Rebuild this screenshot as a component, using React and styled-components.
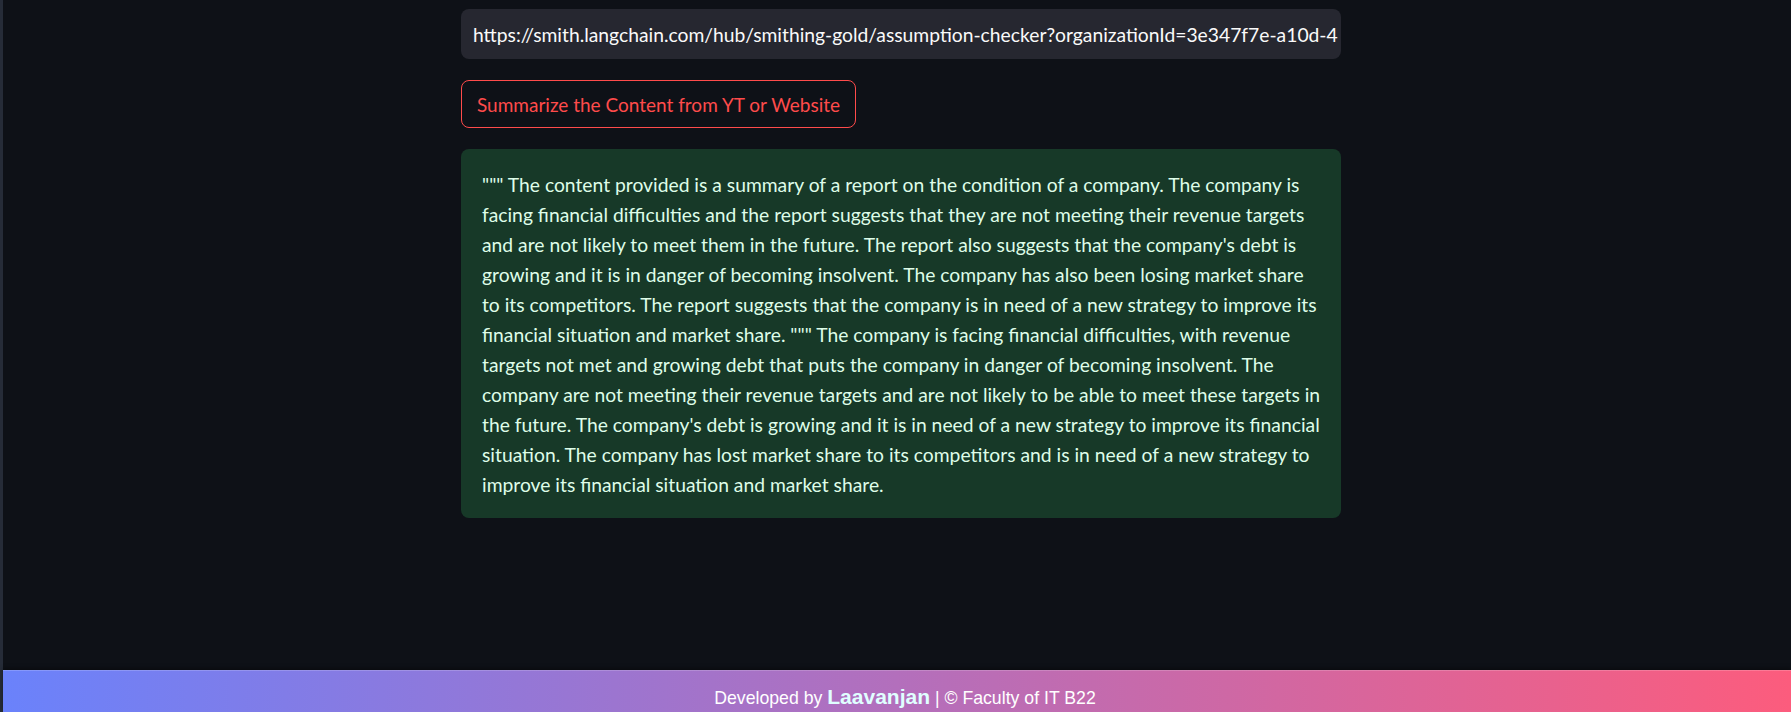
import React from 'react'
import styled, {createGlobalStyle} from 'styled-components'

const GlobalStyle = createGlobalStyle`
  html, body {
    margin: 0;
    padding: 0;
    background: #0e1117;
  }
  body {
    font-family: Lato, "Noto Sans", sans-serif;
    color: #fafafa;
  }
`;

const Page = styled.div`
  display: flex;
  min-height: 712px;
  background: #0e1117;
`;

// thin sidebar edge on the left
const SideEdge = styled.div`
  width: 3px;
  flex: none;
  background: #262c38;
`;

const Main = styled.div`
  flex: 1;
  display: flex;
  flex-direction: column;
`;

const Content = styled.div`
  flex: 1;
  display: flex;
  justify-content: center;
  padding: 9px 0 0 8px;
`;

const Column = styled.div`
  width: 880px;
  display: flex;
  flex-direction: column;
  align-items: flex-start;
  gap: 21px;
`;

const UrlInput = styled.div`
  width: 100%;
  height: 50px;
  box-sizing: border-box;
  background: #262730;
  border-radius: 8px;
  padding: 0 11px 0 12px;
  display: flex;
  align-items: center;
  overflow: hidden;
  white-space: nowrap;
  font-size: 19.3px;
  color: #fafafa;
`;

const OutlineButton = styled.button`
  height: 48px;
  box-sizing: border-box;
  padding: 0 15px;
  background: transparent;
  border: 1px solid #ff4b4b;
  border-radius: 8px;
  color: #ff4b4b;
  font-family: Lato, "Noto Sans", sans-serif;
  font-size: 19px;
  cursor: pointer;
`;

const SuccessBox = styled.div`
  width: 100%;
  box-sizing: border-box;
  background: #173928;
  border-radius: 8px;
  padding: 21px 21px 18px;
  color: #dffde9;
  font-size: 19.3px;
  line-height: 30px;
`;

const Line = styled.span`
  display: block;
  white-space: nowrap;
`;

const Footer = styled.footer`
  height: 42px;
  box-sizing: border-box;
  padding: 14px 0 0 16px;
  background: linear-gradient(90deg, #6a82fb, #fc5c7d);
  border-top: 1px solid rgba(255, 255, 255, 0.18);
  box-shadow: 0 -2px 4px rgba(0, 0, 0, 0.35);
  text-align: center;
  font-family: "Liberation Sans", Arial, sans-serif;
  font-size: 17.7px;
  color: #ffffff;
  overflow: hidden;
  white-space: nowrap;
`;

const Author = styled.span`
  font-weight: bold;
  font-size: 21px;
  color: #e0ffff;
`;

const url = 'https://smith.langchain.com/hub/smithing-gold/assumption-checker?organizationId=3e347f7e-a10d-4';

const summaryLines = [
  `""" The content provided is a summary of a report on the condition of a company. The company is`,
  `facing financial difficulties and the report suggests that they are not meeting their revenue targets`,
  `and are not likely to meet them in the future. The report also suggests that the company's debt is`,
  `growing and it is in danger of becoming insolvent. The company has also been losing market share`,
  `to its competitors. The report suggests that the company is in need of a new strategy to improve its`,
  `financial situation and market share. """ The company is facing financial difficulties, with revenue`,
  `targets not met and growing debt that puts the company in danger of becoming insolvent. The`,
  `company are not meeting their revenue targets and are not likely to be able to meet these targets in`,
  `the future. The company's debt is growing and it is in need of a new strategy to improve its financial`,
  `situation. The company has lost market share to its competitors and is in need of a new strategy to`,
  `improve its financial situation and market share.`,
];

export default function App() {
  return (
    <>
      <GlobalStyle/>
      <Page>
        <SideEdge/>
        <Main>
          <Content>
            <Column>
              <UrlInput>{url}</UrlInput>
              <OutlineButton>Summarize the Content from YT or Website</OutlineButton>
              <SuccessBox>
                {summaryLines.map((l, i) => <Line key={i}>{l}</Line>)}
              </SuccessBox>
            </Column>
          </Content>
          <Footer>
            Developed by <Author>Laavanjan</Author> | © Faculty of IT B22
          </Footer>
        </Main>
      </Page>
    </>
  );
}
